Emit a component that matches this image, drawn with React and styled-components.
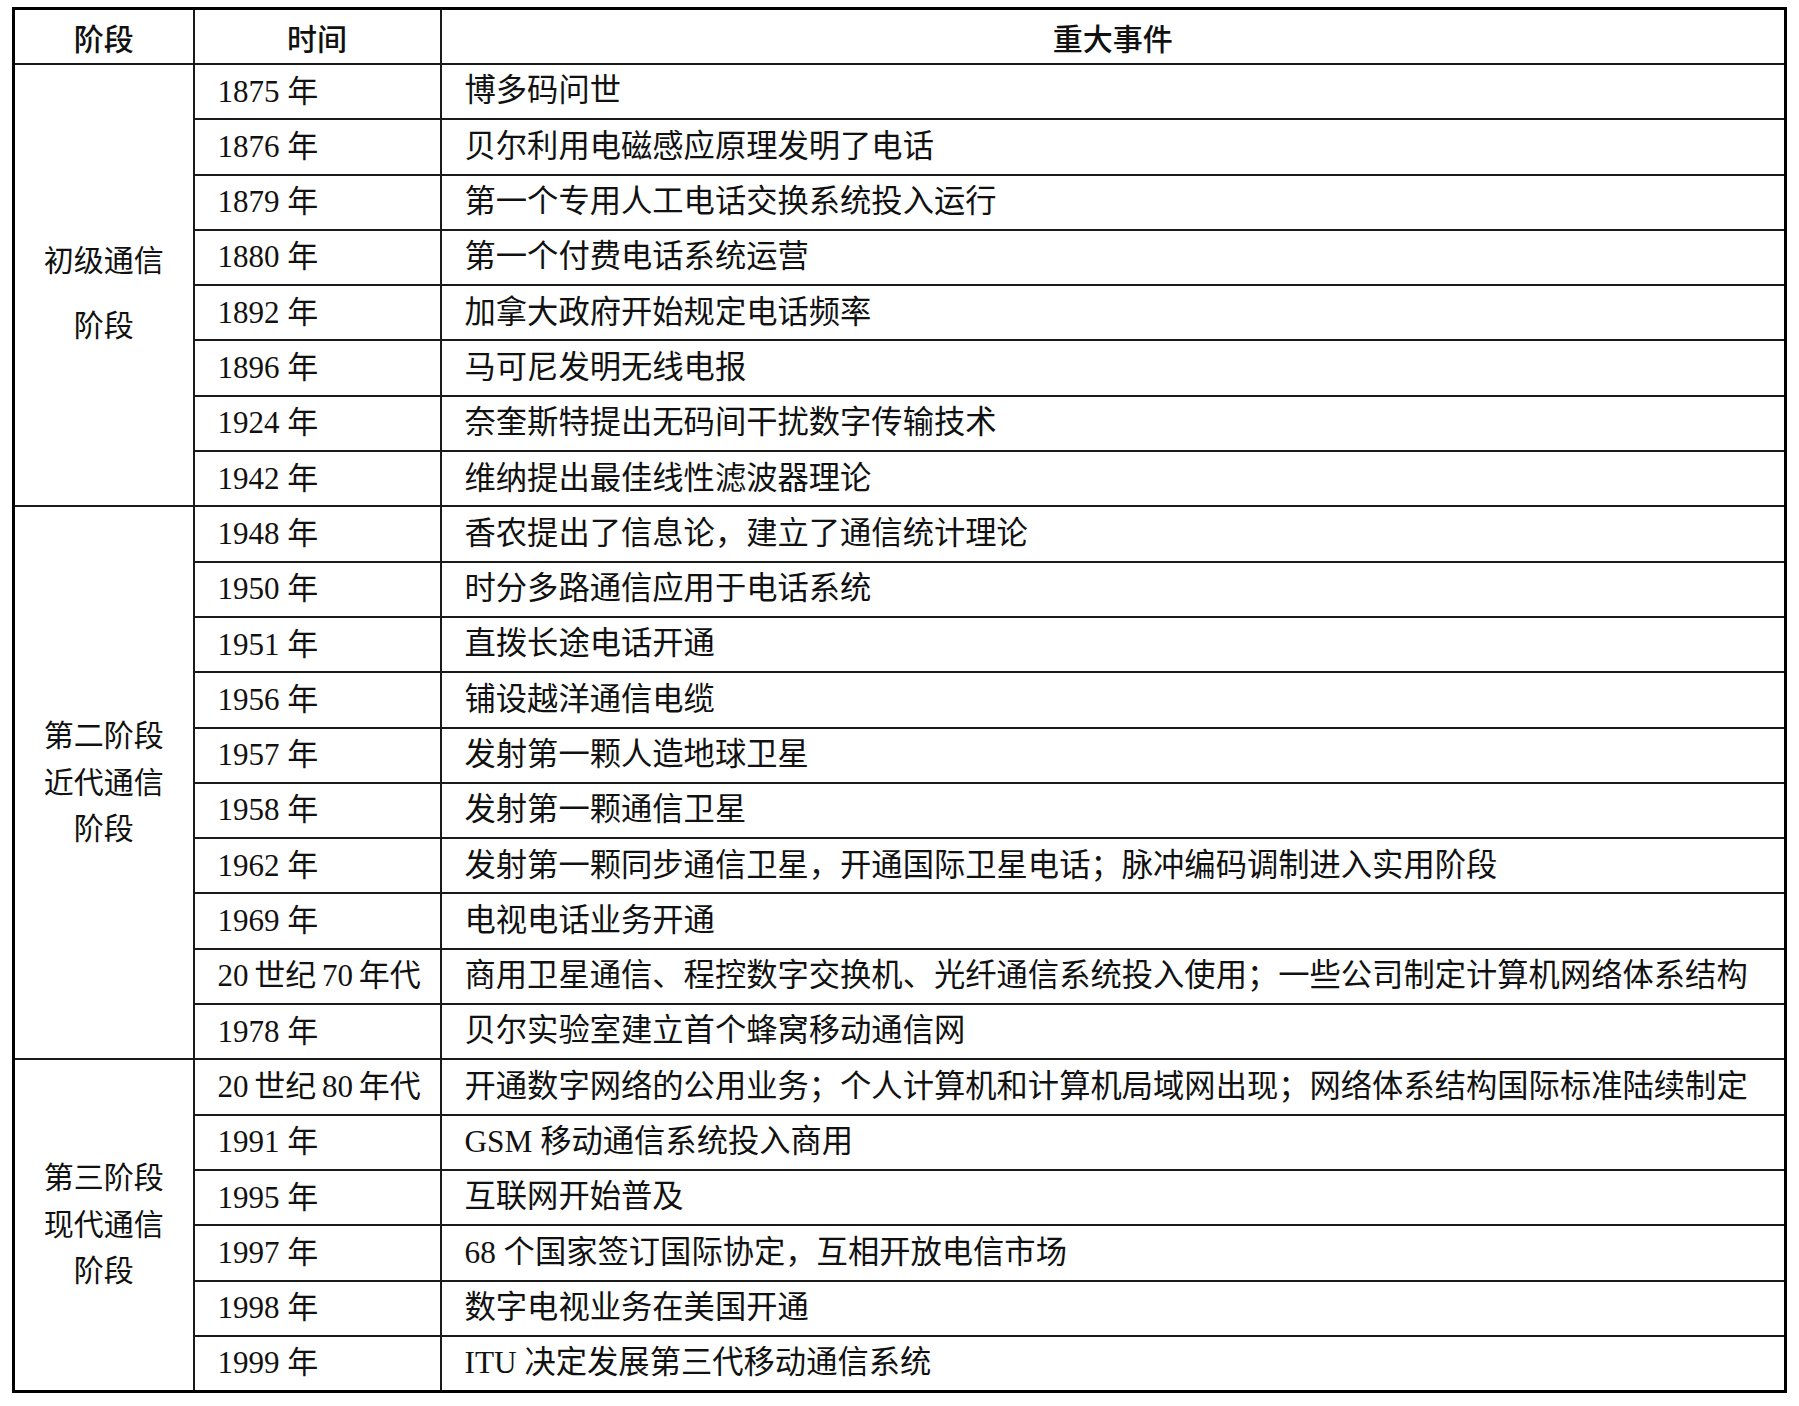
import { createGlobalStyle, styled } from 'styled-components';

const GlobalStyle = createGlobalStyle`
  html, body {
    margin: 0;
    padding: 0;
    background: #fff;
  }
  body {
    font-family: "Liberation Serif", "Noto Sans CJK SC", serif;
    color: #111;
  }
`;

const Page = styled.div`
  padding: 7px 12px;
  width: 1775px;
`;

const Table = styled.table`
  width: 1775px;
  table-layout: fixed;
  border-collapse: collapse;
  border: 3px solid #000;
`;

const HeadCell = styled.th`
  height: 53px;
  padding: 0;
  font-family: "Noto Sans CJK SC", sans-serif;
  font-weight: 500;
  font-size: 30px;
  text-align: center;
  vertical-align: middle;
  border: 2px solid #1a1a1a;
  border-top: 3px solid #000;
`;

const StageCell = styled.td`
  padding: ${(p) => (p.$loose ? '16px 0 0' : '0')};
  font-size: 30px;
  line-height: ${(p) => (p.$loose ? '65px' : '46.5px')};
  text-align: center;
  vertical-align: middle;
  border: 2px solid #1a1a1a;
  border-left: 3px solid #000;
  border-bottom-width: ${(p) => (p.$last ? '3px' : '2px')};
  border-bottom-color: ${(p) => (p.$last ? '#000' : '#1a1a1a')};
`;

const YearCell = styled.td`
  height: 53.3px;
  padding: 0 0 0 23px;
  font-size: 31px;
  line-height: 1.1;
  white-space: nowrap;
  vertical-align: middle;
  word-spacing: ${(p) => (p.$tight ? '-2px' : '0')};
  border: 2px solid #1a1a1a;
`;

const EventCell = styled.td`
  padding: 0 0 0 23px;
  font-size: 31.3px;
  line-height: 1.1;
  white-space: nowrap;
  vertical-align: middle;
  border: 2px solid #1a1a1a;
  border-right: 3px solid #000;
`;

const groups = [
  {
    lines: ['初级通信', '阶段'],
    loose: true,
    rows: [
      ['1875 年', '博多码问世'],
      ['1876 年', '贝尔利用电磁感应原理发明了电话'],
      ['1879 年', '第一个专用人工电话交换系统投入运行'],
      ['1880 年', '第一个付费电话系统运营'],
      ['1892 年', '加拿大政府开始规定电话频率'],
      ['1896 年', '马可尼发明无线电报'],
      ['1924 年', '奈奎斯特提出无码间干扰数字传输技术'],
      ['1942 年', '维纳提出最佳线性滤波器理论'],
    ],
  },
  {
    lines: ['第二阶段', '近代通信', '阶段'],
    rows: [
      ['1948 年', '香农提出了信息论，建立了通信统计理论'],
      ['1950 年', '时分多路通信应用于电话系统'],
      ['1951 年', '直拨长途电话开通'],
      ['1956 年', '铺设越洋通信电缆'],
      ['1957 年', '发射第一颗人造地球卫星'],
      ['1958 年', '发射第一颗通信卫星'],
      ['1962 年', '发射第一颗同步通信卫星，开通国际卫星电话；脉冲编码调制进入实用阶段'],
      ['1969 年', '电视电话业务开通'],
      ['20 世纪 70 年代', '商用卫星通信、程控数字交换机、光纤通信系统投入使用；一些公司制定计算机网络体系结构'],
      ['1978 年', '贝尔实验室建立首个蜂窝移动通信网'],
    ],
  },
  {
    lines: ['第三阶段', '现代通信', '阶段'],
    rows: [
      ['20 世纪 80 年代', '开通数字网络的公用业务；个人计算机和计算机局域网出现；网络体系结构国际标准陆续制定'],
      ['1991 年', 'GSM 移动通信系统投入商用'],
      ['1995 年', '互联网开始普及'],
      ['1997 年', '68 个国家签订国际协定，互相开放电信市场'],
      ['1998 年', '数字电视业务在美国开通'],
      ['1999 年', 'ITU 决定发展第三代移动通信系统'],
    ],
  },
];

export default function App() {
  return (
    <Page>
      <GlobalStyle />
      <Table>
        <colgroup>
          <col style={{ width: 180 }} />
          <col style={{ width: 247 }} />
          <col />
        </colgroup>
        <thead>
          <tr>
            <HeadCell style={{ borderLeft: '3px solid #000' }}>阶段</HeadCell>
            <HeadCell>时间</HeadCell>
            <HeadCell style={{ borderRight: '3px solid #000' }}>重大事件</HeadCell>
          </tr>
        </thead>
        <tbody>
          {groups.map((g, gi) =>
            g.rows.map(([year, event], ri) => (
              <tr key={`${gi}-${ri}`}>
                {ri === 0 && (
                  <StageCell
                    rowSpan={g.rows.length}
                    $loose={g.loose}
                    $last={gi === groups.length - 1}
                  >
                    {g.lines.map((l) => (
                      <div key={l}>{l}</div>
                    ))}
                  </StageCell>
                )}
                <YearCell $tight={year.includes('世纪')}>{year}</YearCell>
                <EventCell>{event}</EventCell>
              </tr>
            ))
          )}
        </tbody>
      </Table>
    </Page>
  );
}
